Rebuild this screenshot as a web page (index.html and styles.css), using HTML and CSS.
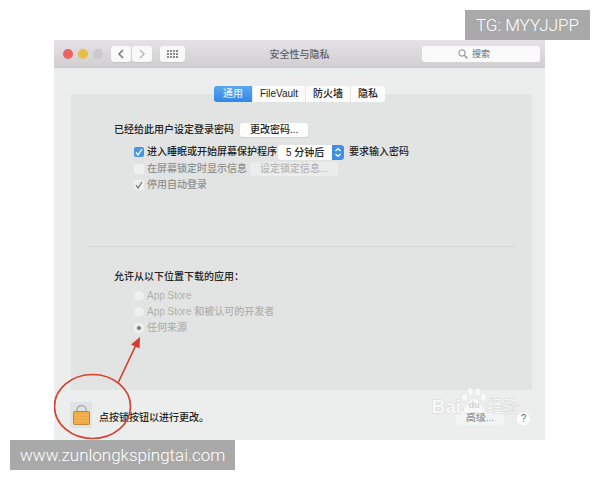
FILE: index.html
```html
<!DOCTYPE html>
<html lang="zh-CN">
<head>
<meta charset="utf-8">
<title>安全性与隐私</title>
<link rel="stylesheet" href="styles.css">
</head>
<body>
<div class="tag tag-top">TG: MYYJJPP</div>
<main class="window">
  <header class="titlebar">
    <div class="lights"><span class="light red"></span><span class="light yellow"></span><span class="light gray"></span></div>
    <div class="nav">
      <button class="tool" aria-label="后退"><svg width="8" height="10" viewBox="0 0 8 10"><path d="M6 1 2 5l4 4" fill="none" stroke="#777" stroke-width="1.5"/></svg></button>
      <button class="tool" aria-label="前进"><svg width="8" height="10" viewBox="0 0 8 10"><path d="m2 1 4 4-4 4" fill="none" stroke="#bbb" stroke-width="1.5"/></svg></button>
    </div>
    <button class="tool tool-grid" aria-label="显示全部"><svg width="11" height="8" viewBox="0 0 11 8"><path d="M0 1h11M0 4h11M0 7h11" stroke="#8a8a8a" stroke-width="2" stroke-dasharray="2 1"/></svg></button>
    <h1 class="title">安全性与隐私</h1>
    <label class="search"><svg width="10" height="10" viewBox="0 0 10 10"><circle cx="4" cy="4" r="3.200" fill="none" stroke="#888"/><path d="m6.400 6.400 3.100 3.100" stroke="#888" stroke-width="1.200"/></svg><input type="search" placeholder="搜索" aria-label="搜索"></label>
  </header>
  <nav class="tabs">
    <button class="tab active">通用</button><button class="tab">FileVault</button><button class="tab">防火墙</button><button class="tab">隐私</button>
  </nav>
  <section class="panel">
    <div class="row row-password"><span>已经给此用户设定登录密码</span><button class="btn">更改密码...</button></div>
    <div class="options">
      <div class="row row-sleep"><input class="check" type="checkbox" id="sleep" checked><label for="sleep">进入睡眠或开始屏幕保护程序</label>
        <span class="picker"><select aria-label="要求输入密码的时间"><option>5 分钟后</option></select><svg class="stepper" width="12" height="15" viewBox="0 0 12 15"><path d="m3.500 6 2.500-2.500L8.500 6M3.500 9 6 11.500 8.500 9" fill="none" stroke="#fff" stroke-width="1.200"/></svg></span>
        <span>要求输入密码</span></div>
      <div class="row muted"><input class="check" type="checkbox" id="message" disabled><label for="message">在屏幕锁定时显示信息</label><button class="btn btn-muted" disabled>设定锁定信息...</button></div>
      <div class="row muted"><input class="check" type="checkbox" id="auto" checked disabled><label for="auto">停用自动登录</label></div>
    </div>
    <hr>
    <h2 class="heading">允许从以下位置下载的应用：</h2>
    <div class="options faint">
      <div class="row"><input class="radio" type="radio" name="source" id="store" disabled><label for="store">App Store</label></div>
      <div class="row"><input class="radio" type="radio" name="source" id="developers" disabled><label for="developers">App Store 和被认可的开发者</label></div>
      <div class="row"><input class="radio" type="radio" name="source" id="anywhere" checked disabled><label for="anywhere">任何来源</label></div>
    </div>
  </section>
  <footer class="footer">
    <button class="lock" aria-label="解锁"><svg width="22" height="26" viewBox="0 0 22 26"><path d="M7 10V8a4.500 4.500 0 0 1 9 0v2" fill="none" stroke="#a9adab" stroke-width="1.500"/><rect x="3.500" y="9.500" width="16" height="13" rx="1" fill="#efaa45" stroke="#bd8739"/><path d="M4 13h15M4 16h15M4 19h15" stroke="#f3b456" stroke-width="1"/></svg></button>
    <span class="lock-text">点按锁按钮以进行更改。</span>
    <button class="btn advanced" disabled>高级...</button>
    <button class="help" aria-label="帮助">?</button>
  </footer>
  <div class="watermark"><span>Bai</span><svg width="26" height="28" viewBox="0 0 28 30"><g fill="#fafbfa" stroke="#d0d4d2" stroke-width=".8"><ellipse cx="4" cy="11" rx="3" ry="4"/><ellipse cx="10" cy="5" rx="3" ry="4"/><ellipse cx="18" cy="5" rx="3" ry="4"/><ellipse cx="24" cy="11" rx="3" ry="4"/><path d="M14 12c-4 0-5 5-9 8-5 5-1 9 4 8 4-1 6-1 10 0 6 1 9-3 4-8-4-3-5-8-9-8Z"/></g><text x="8" y="23" class="du">du</text></svg><span class="experience">经验</span></div>
  <svg class="annotation" width="100" height="110" viewBox="0 0 100 110" aria-hidden="true"><g fill="none" stroke="#d5422f" stroke-width="1.700"><ellipse cx="38.500" cy="71.500" rx="38" ry="32"/><path d="M64 48 82 10"/></g><path d="m86 2-9 7.500 8.500 4Z" fill="#d8382a"/></svg>
</main>
<div class="tag tag-bottom">www.zunlongkspingtai.com</div>
</body>
</html>
```
FILE: styles.css
```css
* { box-sizing: border-box; }
body { margin: 0; background: #fff; font: 500 10px/16px "Liberation Sans", "Noto Sans CJK SC", sans-serif; color: #222; }
button, input, select { font: inherit; color: inherit; margin: 0; padding: 0; border: 0; }
svg { display: block; flex: none; }
.tag { position: absolute; z-index: 3; height: 30px; padding: 0 10px; background: #a9a9a9; color: #fff; font: 300 17px/30px Roboto, sans-serif; white-space: nowrap; }
.tag-top { top: 10px; right: 10px; padding: 0 11px; }
.tag-bottom { bottom: 10px; left: 10px; }
.window { position: relative; margin: 40px 55px 40px 54px; background: #eceeed; }
.titlebar { position: relative; display: flex; align-items: center; height: 28px; padding: 0 5px 0 9px; background: linear-gradient(#e4e2e4, #d1cfd1); border-bottom: 1px solid #c9c9c9; }
.lights { display: flex; gap: 5px; width: 48px; }
.light { width: 10px; height: 10px; border-radius: 50%; }
.red { background: #ea6460; }
.yellow { background: #e9bd46; }
.gray { background: #cbc9cb; }
.nav { display: flex; gap: 1px; margin-right: 8px; }
.tool { display: flex; align-items: center; justify-content: center; width: 20px; height: 16px; border-radius: 3px; background: #f9f9f9; box-shadow: 0 1px 1px #c4c2c4; }
.tool-grid { width: 25px; }
.title { position: absolute; inset: 0; margin: 0; text-align: center; font: inherit; line-height: 30px; color: #636163; pointer-events: none; }
.search { display: flex; align-items: center; justify-content: center; gap: 4px; width: 118px; height: 16px; margin-left: auto; border-radius: 3px; background: #fafafa; }
.search input { width: 32px; height: 16px; background: none; outline: 0; font-size: 9px; appearance: none; }
.search input::placeholder { color: #858585; opacity: 1; }
.tabs { position: relative; display: flex; justify-content: center; margin: 18px 0 -8px; }
.tab { height: 16px; padding: 0 7px; background: #fcfcfc; border-right: 1px solid #e5e5e5; line-height: 16px; }
.tab:first-child { padding: 0 9px; border-radius: 3px 0 0 3px; }
.tab:last-child { border-right: 0; border-radius: 0 3px 3px 0; }
.tab.active { background: linear-gradient(#5ba8f0, #3287e6); color: #e3f0fd; }
.panel { margin: 0 13px 0 17px; padding: 28px 17px 54px; background: #e2e4e3; }
.row { display: flex; align-items: center; height: 16px; white-space: nowrap; }
.row-password { margin-left: 26px; gap: 6px; }
.btn { height: 14px; padding: 0 10px; border-radius: 3px; background: #fdfdfd; line-height: 14px; box-shadow: 0 1px 1px #cfd1d0; }
.options { margin-left: 46px; }
.row-sleep { height: 18px; margin-top: 5px; }
.check, .radio { appearance: none; flex: none; width: 10px; height: 10px; margin-right: 3px; border-radius: 2px; background: #efefef; }
.check:checked { background: #4796df url("data:image/svg+xml,%3Csvg xmlns='http://www.w3.org/2000/svg' viewBox='0 0 10 10'%3E%3Cpath d='m2 5 2 3 4-6' fill='none' stroke='white' stroke-width='1.300'/%3E%3C/svg%3E"); }
.check:checked:disabled { background: #efefef url("data:image/svg+xml,%3Csvg xmlns='http://www.w3.org/2000/svg' viewBox='0 0 10 10'%3E%3Cpath d='m2 5 2 3 4-6' fill='none' stroke='%23777' stroke-width='1.300'/%3E%3C/svg%3E"); }
.radio { border-radius: 50%; }
.radio:checked { background: radial-gradient(circle, #737876 0 1px, #f2f2f2 3px); }
.picker { position: relative; margin: 0 5px 0 1px; }
.picker select { display: block; appearance: none; width: 66px; height: 15px; padding-left: 8px; border-radius: 3px; background: #fdfdfd; line-height: 15px; }
.stepper { position: absolute; right: 0; top: 0; border-radius: 0 3px 3px 0; background: #4290e5; pointer-events: none; }
.muted { color: #8f9190; }
.btn-muted { margin-left: 3px; background: #ebecec; color: #b4b5b4; box-shadow: none; }
hr { height: 1px; margin: 53px 0 22px; border: 0; background: #d5d7d6; }
.heading { margin: 0 0 3px 26px; font: inherit; }
.faint { color: #afb1b0; }
.footer { display: flex; align-items: center; height: 50px; padding: 6px 15px 0 16px; }
.lock { display: flex; align-self: flex-start; margin-top: 6px; justify-content: center; width: 22px; height: 26px; background: #dfe4e2; }
.lock-text { margin-left: 7px; }
.advanced { margin-left: auto; margin-right: 13px; background: #f2f3f3; color: #929493; box-shadow: none; }
.help { width: 13px; height: 13px; border-radius: 50%; background: #fff; color: #63706d; line-height: 13px; }
.watermark { position: absolute; right: 26px; bottom: 25px; display: flex; align-items: flex-end; color: #fafbfa; font: 700 19px/16px "Liberation Sans", "Noto Sans CJK SC", sans-serif; -webkit-text-stroke: 1px #ced2d0; paint-order: stroke fill; opacity: .8; pointer-events: none; }
.watermark .experience { font-size: 16px; font-weight: 400; }
.du { font: 700 10px "Liberation Sans", sans-serif; fill: #c9ccca; -webkit-text-stroke: 0; }
.annotation { position: absolute; left: 0; bottom: -5px; height: 110px; pointer-events: none; }
```
